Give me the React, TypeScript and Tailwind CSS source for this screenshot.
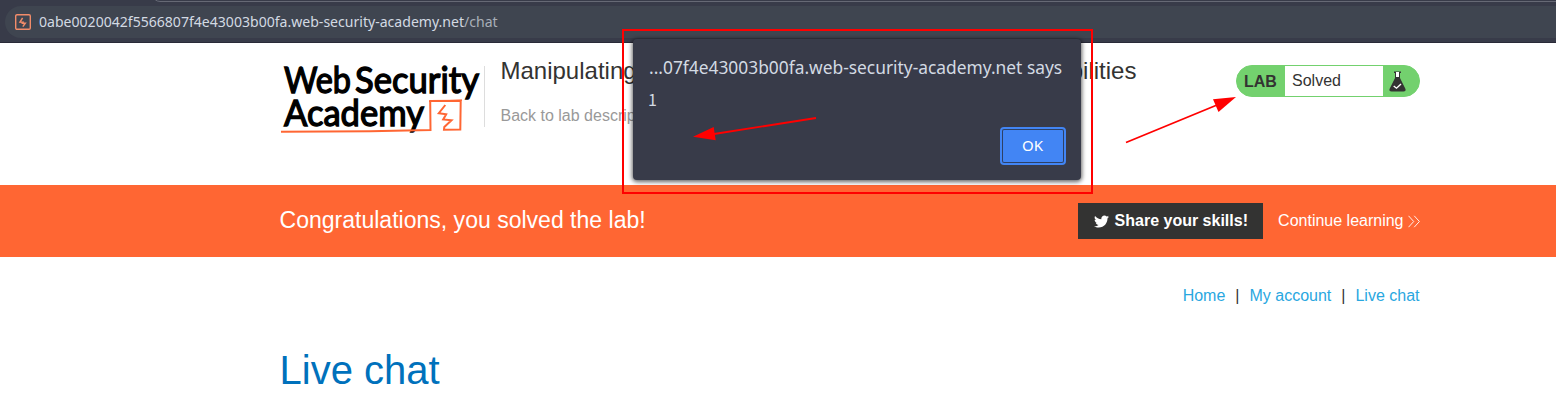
import React from "react";
import { FaTwitter } from "react-icons/fa";

function AddressBar() {
  return (
    <div className="relative flex h-[43px] flex-col overflow-hidden border-b border-[#292a38] bg-[#383b49] font-['Noto_Sans',sans-serif]">
      <div className="absolute -top-[7px] left-[152px] h-[9px] w-[1450px] rounded-bl-lg border border-[#666975] bg-[#383b49]" />
      <div className="mt-[6px] ml-[5px] flex h-8 shrink-0 items-center rounded-l-full bg-[#3f4550] pl-[10px]">
        <svg width="16" height="16" viewBox="0 0 16 16" fill="none" stroke="#f28c6a">
          <rect x="0.7" y="0.7" width="14.6" height="14.6" rx="1.3" strokeWidth="1.4" />
          <path d="M7.6 3.8 5 8.1 8 8.2 7.5 9.2 10.3 9.2 7.8 12.6" strokeWidth="1.5" />
        </svg>
        <span className="ml-2 text-[14.07px] leading-8 whitespace-nowrap text-[#d3dae3]">
          0abe0020042f5566807f4e43003b00fa.web-security-academy.net<span className="text-[#a9afb8]">/chat</span>
        </span>
      </div>
    </div>
  );
}

function Logo() {
  return (
    <svg className="shrink-0" width="204" height="76" viewBox="280 62 204 76">
      <g fill="#000" stroke="#000" strokeWidth="1.4" fontFamily="Lato, sans-serif" fontWeight="400" fontSize="36.5">
        <text x="284" y="93" textLength="67" lengthAdjust="spacingAndGlyphs">Web</text>
        <text x="355" y="93" textLength="124" lengthAdjust="spacingAndGlyphs">Security</text>
        <text x="284" y="125.8" textLength="140" lengthAdjust="spacingAndGlyphs">Academy</text>
      </g>
      <g fill="none" stroke="#ff6633" strokeWidth="2">
        <path d="M281 131.7 L325 131.4 L370 131.2 L430.5 130 L430.2 101 L460.7 100.7 L460.3 129.4 L444 129.7 L444.3 127 L451.5 120.2 L443.2 119.5 L446.2 114.3 L438.8 113.2 L445.3 105" />
        <path d="M429 101.3 L462 100.2" strokeWidth="1.3" />
      </g>
    </svg>
  );
}

function LabStatus() {
  return (
    <div className="mt-[22px] flex h-8 w-[184px] shrink-0 items-stretch overflow-hidden rounded-full border border-[#73d16e] bg-[#73d16e] text-[16px] leading-[30px] text-[#333332]">
      <span className="w-12 pl-[7px] pt-px font-bold">LAB</span>
      <span className="w-[98px] bg-white pl-[7px]">Solved</span>
      <svg className="mt-[5px] ml-[6px]" width="17" height="21" viewBox="0 0 17 21">
        <path d="M5 0.5H12V2H11V7L16.5 18Q17 20.5 14.5 20.5H2.5Q0 20.5 .5 18L6 7V2H5Z" fill="#333332" />
        <path d="M7 1H10V6H7Z" fill="#fff" />
        <path d="M4.7 15 7.5 17.2 12 13" fill="none" stroke="#fff" strokeWidth="1.4" />
      </svg>
    </div>
  );
}

function AlertDialog() {
  return (
    <div className="absolute top-[39px] left-[633px] flex h-[141px] w-[448px] flex-col rounded-[4px] bg-[#383b49] px-4 font-['Noto_Sans',sans-serif] text-[#d3dae3] shadow-[0_1px_4px_1px_rgba(0,0,0,0.6)]">
      <div className="mt-[15px] h-[26px] text-[17.37px] leading-[26px] whitespace-nowrap">
        ...07f4e43003b00fa.web-security-academy.net says
      </div>
      <div className="mt-[9px] -ml-[1px] h-5 font-['Noto_Sans_CJK_SC',sans-serif] text-[16px] leading-5">1</div>
      <button className="mt-[20px] mr-px flex h-[34px] w-[62px] items-center justify-center self-end rounded-[2px] border border-[#2d4166] bg-[#4285f4] pb-[2px] pr-px text-[15px] text-white outline-2 outline-[#4285f4]">
        OK
      </button>
    </div>
  );
}

function Annotations() {
  return (
    <svg className="pointer-events-none absolute inset-0" width="1556" height="410" viewBox="0 0 1556 410">
      <g fill="none" stroke="#ff0000" strokeWidth="2">
        <rect x="623" y="30" width="469" height="163" />
        <path d="M816 118 L714 134 M1126 142.5 L1217 105" strokeWidth="1.8" />
      </g>
      <g fill="#ff0000">
        <path d="M693 136.8 L713.7 127 L715.7 140.3Z" />
        <path d="M1236 97 L1213 99.2 L1218.5 112Z" />
      </g>
    </svg>
  );
}

export default function App() {
  return (
    <div className="relative h-[410px] w-[1556px] overflow-hidden bg-white font-['Liberation_Sans',Arial,sans-serif] text-[#333332]">
      <AddressBar />
      <header className="flex h-[142px] pl-[280px]">
        <div className="flex w-[1140px]">
          <div className="pt-[19px]"><Logo /></div>
          <div className="mt-[23px] h-[61px] w-px bg-[#dddddd]" />
          <div className="flex flex-1 flex-col pl-[15.5px]">
            <h2 className="mt-[14px] text-[24px] leading-7 whitespace-nowrap">Manipulating WebSocket messages to exploit vulnerabilities</h2>
            <a className="mt-[21px] text-[16px] leading-5 text-[#999999]">Back to lab description</a>
          </div>
          <LabStatus />
        </div>
      </header>
      <section className="flex h-[72px] bg-[#ff6633] pl-[279.5px] text-white">
        <div className="flex w-[1140.5px] items-center">
          <h3 className="flex-1 pb-[2px] text-[23.04px]">Congratulations, you solved the lab!</h3>
          <button className="flex h-9 w-[185px] items-center bg-[#333332] pl-4 text-[16px] font-bold whitespace-nowrap">
            <FaTwitter className="mr-[5.5px] size-[15px] shrink-0" />
            Share your skills!
          </button>
          <a className="ml-[15px] flex items-center text-[16px] whitespace-nowrap">
            Continue learning
            <svg className="ml-[4.5px]" width="12" height="13" viewBox="0 0 12 13" fill="none" stroke="white" strokeWidth="0.9">
              <path d="M0.5 .8 5.7 6.5 .5 12.2M6.2 .8 11.4 6.5 6.2 12.2" />
            </svg>
          </a>
        </div>
      </section>
      <main className="w-[1419.5px] pl-[279.5px]">
        <nav className="flex h-[77px] items-center justify-end text-[16px] text-[#29a7df]">
          <a>Home</a>
          <span className="mx-[10px] text-[#333332]">|</span>
          <a>My account</a>
          <span className="mx-[10px] text-[#333332]">|</span>
          <a>Live chat</a>
        </nav>
        <h1 className="mt-[11px] text-[40px] leading-[50px] text-[#0071bc]">Live chat</h1>
      </main>
      <AlertDialog />
      <Annotations />
    </div>
  );
}
